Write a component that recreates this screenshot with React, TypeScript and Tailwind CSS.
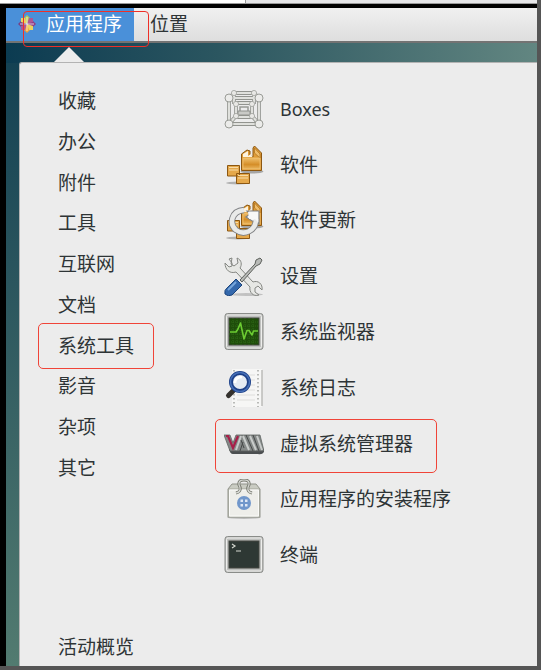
import React from "react";

type IconProps = { children: React.ReactNode };

function Icon({ children }: IconProps) {
  return (
    <svg viewBox="0 0 40 40" className="size-10 shrink-0" aria-hidden="true" fill="none">
      {children}
    </svg>
  );
}

function BoxesIcon() {
  const outer = [[5, 9], [35, 9], [5, 35], [35, 35]];
  const inner = [[10, 4], [30, 4], [12, 15], [28, 15], [12, 27], [28, 27]];
  const frame = "M5 9H35V35H5ZM10 4H30L35 9M10 4L5 9M10 4V15M30 4V15M12 14H28V28H12ZM5 35L12 27M35 35L28 27";
  return (
    <Icon>
      <path d={frame} stroke="#92948f" strokeWidth="3.800" />
      <path d={frame} stroke="#e0e1dd" strokeWidth="2.200" />
      <path d="M16 18H24V25H16Z" stroke="#989a95" strokeWidth="1.500" />
      <path d="M14 22H26V26H14Z" fill="#c9cac6" stroke="#8f918c" />
      {inner.map(([x, y]) => (
        <circle key={`${x}-${y}`} cx={x} cy={y} r="2.600" fill="#e8e8e5" stroke="#a0a29d" strokeWidth="0.8" />
      ))}
      {outer.map(([x, y]) => (
        <circle key={`${x}-${y}`} cx={x} cy={y} r="4" fill="#ececea" stroke="#9a9c97" />
      ))}
    </Icon>
  );
}

function Packages() {
  return (
    <>
      <ellipse cx="28" cy="26.500" rx="11.500" ry="2" fill="#000" opacity=".3" />
      <ellipse cx="14" cy="38" rx="12" ry="1.500" fill="#000" opacity=".25" />
      <path d="M17.500 9L23 5L26 6V10L29 12V3L30.500 1L37.500 8V25.500H17.500Z" fill="#df9c38" stroke="#8c5711" strokeLinejoin="round" />
      <path d="M19 9L24 6V11L27 9L28.500 12H19Z" fill="#fdf3df" />
      <path d="M30.500 3L36 9V13L30.500 8Z" fill="#efbd6b" stroke="#a96e1c" strokeWidth=".7" />
      <path d="M19 13H36V24H19Z" fill="url(#pkg)" stroke="#f0c274" strokeWidth=".8" />
      <path d="M3.500 20.500H15.500V31H3.500ZM12.500 28.500H25.500V38.500H12.500Z" fill="#e5a84a" stroke="#8c5711" />
      <path d="M5 22.500H14M5 25H14M14 30.500H24M14 33H24" stroke="#f7dba7" strokeWidth="1.200" />
      <defs>
        <linearGradient id="pkg" x1="0" y1="0" x2="0" y2="1">
          <stop stopColor="#efbf6c" />
          <stop offset=".6" stopColor="#d58e28" />
          <stop offset="1" stopColor="#e9b55f" />
        </linearGradient>
      </defs>
    </>
  );
}

function SoftwareIcon() {
  return (
    <Icon>
      <Packages />
    </Icon>
  );
}

function UpdateIcon() {
  const ring = "M20 10C7 11 5 24 12 30C20 36 32 31 32 19";
  return (
    <Icon>
      <Packages />
      <path d={ring} stroke="#808285" strokeWidth="6.400" />
      <path d="M23 11H35V24L32 21L28 21L22 17L26 14Z" fill="#f8f8f7" stroke="#808285" strokeWidth="1.200" />
      <path d={ring} stroke="#e9eae9" strokeWidth="4.600" />
      <path d="M24 12H34V22L31 19H25Z" fill="#f8f8f7" />
    </Icon>
  );
}

function SettingsIcon() {
  return (
    <Icon>
      <ellipse cx="22" cy="38.500" rx="17" ry="1.500" fill="#000" opacity=".18" />
      <path d="M8 2L7 8L10 10L14 7L13 2C18 4 18 9 16 12L29 26C34 24 39 28 38 34L34 30L31 32V36L35 39C29 41 25 36 26 31L12 16C6 18 1 14 1 7L5 11L8 10L8 7L5 3Z" fill="#e6e7e4" stroke="#858783" />
      <path d="M16 24L31 8L32 4L36 2L38 4L36 8L32 10L18 26Z" fill="#b8bab7" stroke="#5d605c" />
      <path d="M12 23L18 29L8 39Q4 41 1 38Q0 34 3 32Z" fill="#3468ac" stroke="#1d457c" />
      <path d="M12 26L4 34" stroke="#77a6dc" strokeWidth="2" />
    </Icon>
  );
}

function ScreenFrame({ fill }: { fill: string }) {
  return (
    <>
      <rect x="1" y="1.500" width="38" height="36" rx="2.500" fill="#bfc0be" stroke="#8a8c89" />
      <rect x="2.500" y="3" width="35" height="33" rx="1.500" stroke="#eeeeec" />
      <rect x="5" y="6" width="30" height="27" fill={fill} stroke="#42453f" />
    </>
  );
}

function MonitorIcon() {
  return (
    <Icon>
      <ScreenFrame fill="#1f4d0a" />
      <path d="M5 10H35M5 14H35M5 18H35M5 22H35M5 26H35M5 30H35M9 6V33M13 6V33M17 6V33M21 6V33M25 6V33M29 6V33" stroke="#34701a" strokeWidth=".8" strokeDasharray="1 1" />
      <path d="M6 20H12L14 17L16.500 11L20 27L23 18.500H25L28 23L29.500 19H34" stroke="#6ccc32" strokeWidth="1.600" strokeLinejoin="round" />
    </Icon>
  );
}

function LogIcon() {
  return (
    <Icon>
      <path d="M8 1H38V39H8Z" fill="#f6f6f5" />
      <path d="M38 2V38" stroke="#bbbbb9" strokeWidth="1.500" />
      <path d="M10 2V39M34 2V39" stroke="#a5a7a3" strokeWidth="1.500" strokeDasharray="1.500 2.500" />
      <path d="M13 7H31M13 12H31M13 17H31M13 22H31M13 27H31M13 32H31" stroke="#dededc" />
      <path d="M9 23L4.500 27.500" stroke="#34312d" strokeWidth="5" strokeLinecap="round" />
      <circle cx="16" cy="14" r="9" fill="#e5ebf3" stroke="#1d4088" strokeWidth="4" />
      <circle cx="16" cy="14" r="9.500" stroke="#4770b8" strokeWidth="1.500" />
      <path d="M11 15Q11 9 18 9" stroke="#fff" strokeWidth="2.500" />
    </Icon>
  );
}

function VirtIcon() {
  return (
    <Icon>
      <path d="M5 25H40V28Q38 31 34 30H9Q6 30 5 25Z" fill="#4b4e50" />
      <path d="M0 11H6L9 19L12 11H36L40 27H6Z" fill="#858988" stroke="#606463" strokeWidth=".8" />
      <path d="M2 12H4L9 24L14 12" stroke="#a81f49" strokeWidth="2.200" />
      <path d="M17 12L12 26M19 12L25 26M26 12L32 26M33 12L38 26" stroke="#c9cccb" strokeWidth="2" />
      <path d="M19 18L16 27M22 11L29 27M29 11L35 27M17 16L20 24" stroke="#474a4a" strokeWidth="1" />
    </Icon>
  );
}

function InstallerIcon() {
  return (
    <Icon>
      <ellipse cx="20" cy="38.500" rx="17" ry="1.500" fill="#000" opacity=".2" />
      <path d="M8 5H32L36 10V38H4V10Z" fill="#c9cbc2" stroke="#92948b" />
      <path d="M4.500 10H35.500V38H4.500Z" fill="#eeeeea" stroke="#a4a69d" />
      <path d="M5.500 11H34.500V37H5.500Z" stroke="#fafaf8" />
      <path d="M12 14C17 13 17 9 15 6Q14 1 20 1Q26 1 25 6C23 9 23 13 28 14" stroke="#77796f" strokeWidth="3" />
      <path d="M12 14C17 13 17 9 15 6Q14 1 20 1Q26 1 25 6C23 9 23 13 28 14" stroke="#dddeda" strokeWidth="1.200" />
      <circle cx="20" cy="24" r="7" fill="#7197cb" />
      <path d="M16.500 20.500H19V23H16.500ZM21 20.500H23.500V23H21ZM16.500 25H19V27.500H16.500ZM21 25H23.500V27.500H21Z" fill="#dfe8f5" />
    </Icon>
  );
}

function TerminalIcon() {
  return (
    <Icon>
      <ScreenFrame fill="#2e3834" />
      <path d="M8 9L11 11L8 13M12 16H17" stroke="#d3d7cf" strokeWidth="1.200" />
    </Icon>
  );
}

function Pinwheel() {
  return (
    <svg viewBox="0 0 18 18" className="size-[18px] shrink-0" aria-hidden="true">
      <path d="M9 0L12 3V8H6V3Z" fill="#b5c75b" />
      <path d="M18 9L15 12H10V6H15Z" fill="#8d3b87" />
      <path d="M9 18L6 15V10H12V15Z" fill="#efa33a" />
      <path d="M0 9L3 6H8V12H3Z" fill="#784083" />
      <path d="M3 3H7L9 9L3 7ZM15 15H11L9 9L15 11Z" fill="#ead260" />
      <path d="M15 3V7L9 9L11 3ZM3 15V11L9 9L7 15Z" fill="#ae5794" />
      <path d="M9 2V16M2 9H16" stroke="#fff" strokeWidth=".7" />
    </svg>
  );
}

const categories = ["收藏", "办公", "附件", "工具", "互联网", "文档", "系统工具", "影音", "杂项", "其它"];

const apps = [
  { name: "Boxes", icon: BoxesIcon },
  { name: "软件", icon: SoftwareIcon },
  { name: "软件更新", icon: UpdateIcon },
  { name: "设置", icon: SettingsIcon },
  { name: "系统监视器", icon: MonitorIcon },
  { name: "系统日志", icon: LogIcon },
  { name: "虚拟系统管理器", icon: VirtIcon },
  { name: "应用程序的安装程序", icon: InstallerIcon },
  { name: "终端", icon: TerminalIcon },
];

export default function App() {
  return (
    <div className="flex min-h-screen flex-col border-r-4 border-b-4 border-[#555] bg-black font-['Noto_Sans','Noto_Sans_CJK_SC',sans-serif] text-[19px] leading-6 text-[#2e3436]">
      <div className="flex h-1 border-b border-[#999] bg-[#e6e6e8]">
        <div className="w-[246px] border-r border-[#999] bg-white" />
      </div>
      <div className="mt-1 ml-[6px] flex grow flex-col bg-linear-to-b from-[#0d3c50] to-[#527b70]">
        <header className="flex h-[35px] border-b-2 border-[#737373] bg-linear-to-b from-[#f0f0f0] to-[#dedede]">
          <button className="relative flex w-32 items-center gap-[10px] bg-[#4a90d9] pb-[2px] pl-3 text-white">
            <Pinwheel />
            <span className="whitespace-nowrap">应用程序</span>
            <span className="absolute top-[3px] left-[17px] h-9 w-[126px] rounded-[4px] border border-[#ee3028]" />
          </button>
          <button className="px-4 pb-[2px]">位置</button>
        </header>
        <div className="flex grow flex-col bg-linear-to-r from-[#0b3b51] via-[#2b5660] via-40% to-[#628681] bg-size-[100%_20px] bg-no-repeat pl-[13px]">
          <svg viewBox="0 0 30 15" className="mt-1 ml-[35px] h-[15px] w-[30px] shrink-0" aria-hidden="true">
            <path d="M0 15L15 0L30 15Z" fill="#ececec" />
          </svg>
          <main className="flex grow flex-col rounded-tl-[3px] border-t border-l border-[#b3b3b3] bg-[#ececec] pt-[18px] pb-[7px]">
            <div className="flex grow">
              <nav className="grid h-[407px] w-[204px] shrink-0 grid-rows-10" aria-label="分类">
                {categories.map((name) => (
                  <button key={name} className="relative flex items-center pl-[38px]">
                    {name}
                    {name === "系统工具" && (
                      <span className="absolute -top-[2px] left-[18px] h-[46px] w-[116px] rounded-[5px] border border-[#f04438]" />
                    )}
                  </button>
                ))}
              </nav>
              <div className="grid h-[502px] grow grid-rows-9">
                {apps.map(({ name, icon: AppIcon }) => (
                  <button key={name} className="relative flex items-center gap-4 whitespace-nowrap">
                    <AppIcon />
                    <span className={name === "Boxes" ? "text-lg" : ""}>{name}</span>
                    {name === "虚拟系统管理器" && (
                      <span className="absolute top-[3px] -left-[9px] h-[54px] w-[222px] rounded-[5px] border border-[#f04438]" />
                    )}
                  </button>
                ))}
              </div>
            </div>
            <button className="self-start pl-[38px]">活动概览</button>
          </main>
        </div>
      </div>
    </div>
  );
}
